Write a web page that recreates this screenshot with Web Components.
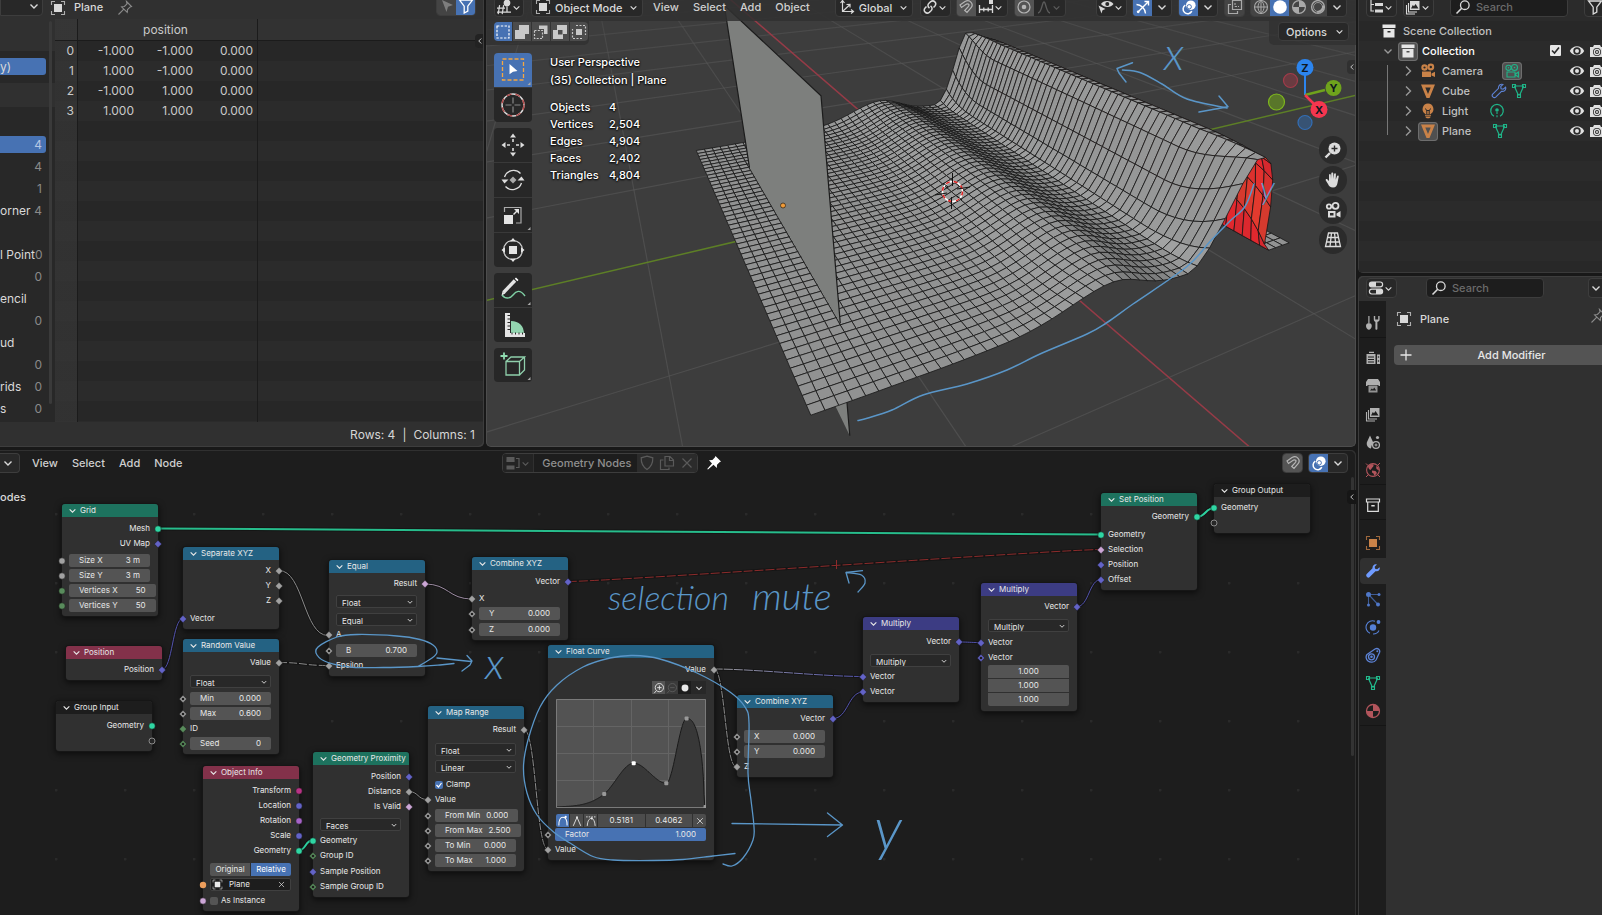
<!DOCTYPE html>
<html lang="en">
<head>
<meta charset="utf-8">
<title>Geometry Nodes</title>
<style>
  html, body {
    height: 100%;
    margin: 0;
  }
  body {
    background: #181818;
    color: #d9d9d9;
    font: 500 11px/20px Inter, "Liberation Sans", sans-serif;
    overflow: hidden;
  }
</style>
</head>
<body>
<app-window></app-window>

<script>
// ---------- icons, all on a 16 unit grid ----------
const line = (d, w = 1.2, extra = "") =>
  `<path d="${d}" fill="none" stroke="currentColor" stroke-width="${w}" ${extra}/>`;
const fill = (d, extra = "") => `<path d="${d}" fill="currentColor" ${extra}/>`;
const ring = (x, y, r, w = 1.2) =>
  `<circle cx="${x}" cy="${y}" r="${r}" fill="none" stroke="currentColor" stroke-width="${w}"/>`;
const dot = (x, y, r) => `<circle cx="${x}" cy="${y}" r="${r}" fill="currentColor"/>`;

const WRENCH = "M14.6 4.2l-2.5 2-2-.5-.4-2 2.2-2.3C9.500 .6 7.200 2.400 7.500 5.300L1.700 11.100c-1.600 1.900 1.100 4.700 3 3l5.800-5.800c3 .4 4.900-1.800 4.100-4.100z";
const CAMERA_BODY = "M3 9h8v5H3zM11.500 11l3-2v5l-3-2z";

const ICONS = {
  down: line("M4.500 6.500L8 10l3.500-3.500", 1.4),
  right: line("M6 3.500l4.500 4.500L6 12.500", 1.4),
  left: line("M10 4L6 8l4 4", 1.4),
  close: line("M3.500 3.500l9 9M12.500 3.500l-9 9", 1.2),
  plus: line("M8 2.500v11M2.500 8h11", 1.3),
  object: fill("M4 4h8v8H4z") + line("M1.500 5V1.500H5M11 1.500h3.500V5M14.500 11v3.500H11M5 14.500H1.500V11", 1.1, 'opacity=".75"'),
  pin: line("M9.500 1.500l5 5-1.300.4-2.700 2.600-.3 2.900-5.600-5.600 2.800-.3 2.600-2.600zM6.800 9.200L1.500 14.500", 1.1),
  pinned: fill("M9.500 1l5.500 5.500-1.500.8-2.500 2.400-.2 3.400-3.300-3.400L2 14.500l-.8-.4L6 8.400 3 5.300l3.400-.4L8.800 2.500z"),
  cursor: fill("M3 2l11 5-5 1.800L7.500 14z"),
  funnel: line("M1.500 2h13L9.800 8.200V13L6.200 15V8.200z", 1.3),
  grid3: fill("M1 12.500h14v1.200H1zM1 8.500h8v1.200H1zM3 6l1.200.2-1.400 9L1.600 15zM7 6l1.200.2-1.400 9L5.600 15z") + dot(11, 4, 3.4) + line("M11 7.500v5.500", 1.3),
  axes: line("M3.500 2v10.500H14M3.500 12.500L10.500 6M1.500 4l2-2.500 2 2.500M12 10.500l2.500 2-2.500 2M7.500 5.500l3.500-.2v3.200", 1.2),
  link: line("M7.500 9.200c-2-1.500-2-3.600-.5-5l1.700-1.500c3-2.300 6.600 1.300 4.200 4.200l-1.400 1.500M8.500 6.800c2 1.500 2 3.600.5 5l-1.700 1.500c-3 2.300-6.600-1.300-4.200-4.200l1.400-1.500", 1.5),
  magnet: line("M2 6l5-3.500c5-2.500 9.200 2.500 5.900 6.300L9 13.500 6.700 11.500l3.800-4.200c1.300-1.900-.3-3-2-2.200L3.500 8.500z", 1.2),
  snap: line("M1.500 6v8M14.500 6v8M1.500 10.500h13M5.800 8.500v4M10.200 8.500v4", 1.3) + fill("M11 1h4v4h-4z"),
  prop: ring(8, 8, 6) + dot(8, 8, 2.3),
  falloff: line("M2 14C6 13.500 6 3 8 3s2 10.500 6 11", 1.3),
  eyecur: fill("M3 5C5 1 13 1 15.500 5 13 9 6 9 3 5zm6.300-2a2 2 0 100 4 2 2 0 000-4z", 'fill-rule="evenodd"') + fill("M.5 6.500l7 3.500-3 1.200-1 3.300z"),
  gizmo: line("M1.500 5.500C6 5.500 10.500 10 10.500 14.500M3 13L13.500 2.500M9.500 2.500h4v4", 1.4) + dot(3.2, 12.8, 1.4),
  overlay: dot(9.800, 6.200, 4.800) + line("M4.300 6.200a4.600 4.600 0 106.500 6", 1.5) + `<circle cx="8.200" cy="7.800" r="2.200" fill="none" stroke="#4772b3"/>`,
  xray: line("M5.500 1.500h9v9h-9zM4 5.500H1.500v9h9V12", 1.2) + line("M8 4v3.500M8 7.500h4", 1.1, 'stroke-dasharray="2 1"'),
  wire: ring(8, 8, 6.500, 1.1) + line("M1.500 8h13M8 1.500v13M8 1.500c-4 3-4 10 0 13M8 1.500c4 3 4 10 0 13", 1),
  solid: dot(8, 8, 6.800),
  matprev: ring(8, 8, 6.400, 1.2) + fill("M8 8V1.600A6.400 6.400 0 0114.400 8zM8 8v6.400A6.400 6.400 0 011.600 8z"),
  rendered: ring(8, 8, 6.400, 1.4) + line("M13.200 6.500c.5 3.500-2.500 6.500-6 6.500", 2.200) + ring(8, 8, 4.500, .8),
  tree: fill("M7 4h8v3H7zM7 10.500h8v3H7z") + line("M3 1v11h3M3 5.500h3", 1.2),
  images: fill("M5 2h9.500v9H5zm1 7.500h7.500L10.600 5 9 7.300 7.800 6z", 'fill-rule="evenodd"') + line("M3.500 4v9h8.500M1.500 6v9h8.500", 1.1),
  search: ring(9.800, 6.200, 4.300, 1.3) + line("M6.700 9.300L1.500 14.500", 1.6),
  collection: fill("M1.500 1.500h13v3.500h-13zM2.500 6h11v8.500h-11zm4 2v1.500h3V8z", 'fill-rule="evenodd"'),
  box: line("M1.500 2h13v3h-13zM2.700 5v9.300h10.600V5", 1.2) + fill("M6.300 8h3.400v1.400H6.300z"),
  camera: dot(4.500, 4.500, 3.200) + dot(10.800, 4, 3.400) + fill("M2 8.500h9v5.500H2zM11.500 10.500l3.500-1.800V14l-3.500-1.500z") + '<circle cx="4.500" cy="4.500" r="1.100" fill="#282828"/><circle cx="10.800" cy="4" r="1.200" fill="#282828"/>',
  cameradata: ring(4.500, 4.800, 2.600, 1.1) + ring(10.500, 4.500, 3, 1.1) + line(CAMERA_BODY, 1.1) + dot(4.500, 4.800, .7) + dot(10.500, 4.500, .8),
  meshobj: fill("M1 1.500h14L9.500 15h-3zM5.300 4.500L8 11l2.700-6.500z", 'fill-rule="evenodd"'),
  meshdata: line("M3 3h10M3.500 3.500l4 9M12.500 3.500l-4 9", 1.2) + line("M1.500 1.500h3v3h-3zM11.500 1.500h3v3h-3zM6.500 11.500h3v3h-3z", 1.1),
  light: fill("M8 .5a5.600 5.600 0 013 10.200V11H5v-.3A5.600 5.600 0 018 .5zM5 11.800h6v1H5zM5.500 13.500h5v.8l-1.300 1H6.800l-1.300-1z") + `<path d="M5.500 5.500l1 2h3l1-2M6.800 7.500V11M9.200 7.500V11" stroke="#282828" fill="none"/>`,
  lightdata: line("M5 13.300a6.300 6.300 0 116 0", 1.2) + dot(8, 7, 1.800) + line("M8 9v6", 1.1, 'stroke-dasharray="2 1.200"'),
  wrenchline: line(WRENCH, 1.1),
  wrench: fill(WRENCH),
  eye: fill("M.8 8C4 1.800 12 1.800 15.200 8 12 13.800 4 13.800.8 8zM8 4.300a3.700 3.700 0 100 7.400 3.700 3.700 0 000-7.400z", 'fill-rule="evenodd"') + dot(8, 8, 2),
  still: fill("M1 4h3l1-2h6l1 2h3v10H1zM8 5a4 4 0 100 8 4 4 0 000-8z", 'fill-rule="evenodd"') + ring(8, 9, 2.600, 1.2) + dot(8, 9, 1),
  props: line("M3.800 2h8.400a2.300 2.300 0 010 4.800H3.800a2.300 2.300 0 010-4.800zM3.800 9.200h8.400a2.300 2.300 0 010 4.800H3.800a2.300 2.300 0 010-4.800z", 1.2) + fill("M3.800 2H8v4.800H3.800a2.300 2.300 0 010-4.800zM8 9.200h4.200a2.300 2.300 0 010 4.800H8z"),
  tools: fill("M3.300 1h1.200v7.500h1.200c2 1.500 1 5.800-1.800 6.200-2.800-.4-3.800-4.700-1.800-6.200h1.200zM8.800 1v3.500c0 1.500 1 2 1.600 2.500V14c0 1 2 1 2 0V7c1-.5 2.200-1 2.200-2.500V1h-1.400v3.500h-3V1z"),
  render: fill("M1.500 4h9v10h-9zM12 4.500h3v9.500h-3zM4 1.800h5V3H4z") + `<path d="M3 7h6M3 9.500h6M3 12h6" stroke="#1d1d1d" fill="none"/><circle cx="13.500" cy="7" r=".8" fill="#1d1d1d"/><circle cx="13.500" cy="11" r=".8" fill="#1d1d1d"/>`,
  output: fill("M3 1h10l2 3v4h-1.500V7h-11v1H1V4z") + fill("M3.500 7.500h9v7h-9z", 'opacity=".8"') + `<path d="M5 12.500l1.800-2 1.200 1 1.200-2 2 3z" fill="#1d1d1d"/>`,
  scene: fill("M5 1.500l3 6.500H2zM2 8c-1 3 1 6 4 6.500.5-3 1-5 3.500-6.500z") + ring(11, 11, 3.400, 1.3) + ring(11, 11, 1, 1) + dot(12.500, 3.500, 1.600),
  world: ring(8, 8, 6.400, 1.1) + fill("M3 4.500c2-2.500 4-2.500 5.500-2 .5 2-1 2.500-1.500 3.500L5.500 8C4 7.500 3.500 6.500 3 4.500zM7 8.500l3.500.5 1.500 2-2.500 3-1-2.500L7 10.500zM11 4l2.500 1.500.5 3-2.500-1.500z") + line("M1 1.500l2.200 2.200M12.800 12.800L15 15M12.800 3.200L15 1M1 15l2.200-2.200", 1),
  particles: dot(3.500, 3.500, 2.500) + line("M3.500 4v10M3.500 3.500h11M5 5l8 8.500", 1.1, 'opacity=".7"') + dot(14, 3.500, 1.500) + dot(3.500, 14, 1.500) + dot(13, 13.500, 2),
  physics: dot(8, 8.500, 3.200) + line("M10 2.300A6.400 6.400 0 105 14.200M8 15a6.500 6.500 0 006-3.500", 1.1) + dot(13.500, 3, 1.900),
  constraint: line("M2 7.500L10 2c3-1.500 5.500 1 4.500 3.500L11 13c-2 3-6 2.500-8 1S.500 9.500 2 7.500z", 1.3) + ring(6.500, 9.800, 3, 1.3) + dot(6.500, 9.800, 1.300) + dot(12.300, 4.200, 1),
  material: ring(8, 8, 6.500, 1.3) + fill("M8 8V1.500A6.500 6.500 0 0114.500 8zM8 8v6.500A6.500 6.500 0 011.500 8z"),
  nodetree: fill("M1.500 2h8v3h-8zM1.500 10.500h8v4h-8z") + line("M2 5.500h7v1H2zM11 3.500h3v9h-3", 1.2),
  shield: line("M8 1.200l5.800 1.600c.2 5-1.600 9-5.800 11.700C3.800 11.800 2 7.800 2.200 2.800z", 1.2),
  copy: line("M6 1.500h5l3.500 3.500v6H6zM4.500 5H1.500v9.500h8.500V12.500M10.500 2v3.500h3.500", 1.2),
  selbox: line("M2 2h12v12H2z", 1.2, 'stroke-dasharray="2.400 1.400"'),
  selext: fill("M5 1h10v9h-4v5H1V6h4z"),
  selsub: fill("M6 1.500h8.500V10H11V5H6z") + line("M1.500 6.500h8v8h-8z", 1.2, 'stroke-dasharray="2 1.300"'),
  seldiff: fill("M5 1h10v9h-4v5H1V6h4zM6 6v4.500h4.500V6z", 'fill-rule="evenodd"'),
  selint: fill("M5 5h6v6H5z") + line("M5 1.500h9.500V11M11 14.500H1.500V5", 1.2, 'stroke-dasharray="2 1.500"'),
  zoomin: ring(8.500, 7.500, 5.500, 1.2) + line("M8.500 4.500v6M5.500 7.500h6M4.500 11.500L1.500 15", 1.2),
  zoomout: ring(8.500, 7.500, 5.500, 1.2) + line("M5.500 7.500h6M4.500 11.500L1.500 15", 1.2),
  clip: dot(8, 8, 4.600),
  hauto: line("M2.500 14C2.500 5 5 3 8 3s5.500 2 5.500 11", 1.4) + dot(11.500, 2.500, 1.500),
  hvec: line("M3 14.500L8 3l5 11.500", 1.2) + dot(8, 3, 1.300),
  hclamp: line("M3 14.500C3.500 7 6 5 8 4.500s5 2 5.500 10", 1.2) + line("M1.500 2.500h13", 1.2, 'stroke-dasharray="2 1.500"') + dot(9, 4.500, 1.400)
};

class BlIcon extends HTMLElement {
  constructor() {
    super();
    this.attachShadow({ mode: "open" });
  }
  connectedCallback() {
    this.shadowRoot.innerHTML = `
      <style>
        :host { display: inline-flex; flex: none; width: var(--size, 16px); height: var(--size, 16px); }
        svg { width: 100%; height: 100%; display: block; }
      </style>
      <svg viewBox="0 0 16 16" aria-hidden="true">${ICONS[this.getAttribute("name")] || ""}</svg>`;
  }
}
customElements.define("bl-icon", BlIcon);

const icon = (name) => `<bl-icon name="${name}"></bl-icon>`;
const chevron = '<bl-icon class="chev" name="down"></bl-icon>';

// Shared look of the header widgets
const WIDGETS = `
  * { box-sizing: border-box; }
  button, select, input {
    font: inherit; color: inherit; margin: 0; padding: 0; border: 0;
    background: none; appearance: none; outline: 0; min-width: 0;
  }
  .bar { display: flex; align-items: flex-end; }
  .menu { height: 20px; padding: 0 7px; color: #cfcfcf; flex: none; }
  .group { display: flex; flex: none; height: 20px; border-radius: 4px; border: 1px solid #3d3d3d; background: #282828; overflow: hidden; }
  .group > button { display: flex; align-items: center; justify-content: center; height: 100%; }
  .on { background: #4772b3; color: #fff; }
  .grey { background: #545454; color: #b5b5b5; }
  .dim { background: #444; color: #aaa; }
  .grow { flex: 1; }
  .chev { --size: 13px; }
  .group .chev { margin-left: -2px; }
`;

class BlElement extends HTMLElement {
  constructor() {
    super();
    this.attachShadow({ mode: "open" });
  }
  connectedCallback() {
    this.shadowRoot.innerHTML = `<style>${WIDGETS}${this.css()}</style>${this.html()}`;
  }
  css() { return ""; }
  html() { return ""; }
}

// Drop-down with an icon, its current value and a chevron
class DropDown extends BlElement {
  css() {
    return `
      :host { display: block; flex: none; }
      label { display: flex; align-items: center; gap: 4px; height: 20px; padding: 0 2px 0 3px; border: 1px solid #3d3d3d; border-radius: 4px; background: #282828; }
      select { flex: 1; height: 18px; }
    `;
  }
  html() {
    const value = this.getAttribute("value");
    return `<label>${icon(this.getAttribute("icon"))}
      <select aria-label="${value}"><option>${value}</option></select>${chevron}</label>`;
  }
}
customElements.define("drop-down", DropDown);

class SearchBox extends BlElement {
  css() {
    return `
      :host { display: block; width: 118px; flex: none; }
      label { display: flex; align-items: center; gap: 5px; height: 20px; padding: 0 4px; border: 1px solid #3d3d3d; border-radius: 4px; background: #1d1d1d; }
      input { flex: 1; width: 0; height: 18px; }
      input::placeholder { color: #6b6b6b; opacity: 1; }
    `;
  }
  html() {
    return `<label>${icon("search")}<input type="text" placeholder="Search" aria-label="Search"></label>`;
  }
}
customElements.define("search-box", SearchBox);

// ---------- spreadsheet ----------
class SpreadSheet extends BlElement {
  css() {
    return `
      :host { display: grid; grid-template: 19px 1fr 25px / 55px 1fr; position: relative; background: #303030; border-radius: 0 0 5px 0; overflow: hidden; box-shadow: inset -1px -1px #3d3d3d; font-size: 12px; font-weight: 400; }
      .bar { grid-column: 1 / 3; padding: 0 8px 3px 0; height: 19px; }
      .bar bl-icon { align-self: flex-end; }
      .bar button bl-icon { align-self: center; }
      .first { width: 43px; justify-content: flex-end; border-radius: 0 4px 4px 0; margin-right: 7px; }
      .name { margin: 0 14px 0 8px; height: 19px; font-size: 11px; font-weight: 500; }
      .pin { display: flex; color: #8a8a8a; }
      .filters button { width: 19px; }
      .off { background: #444; color: #7d7d7d; }
      nav { display: grid; grid-template-rows: 32px 32px 24px 1fr; background: #282828; overflow: hidden; position: relative; }
      nav::after { content: ""; position: absolute; right: 3px; top: 2px; bottom: 18px; width: 3px; border-radius: 2px; background: #3a3a3a; }
      .strip { background: #303030; }
      .pick { background: #4772b3; height: 17px; line-height: 17px; width: 46px; border-radius: 0 3px 3px 0; }
      .inst { margin-top: 7px; }
      ul { list-style: none; margin: 27px 0 0; padding: 0; width: 46px; }
      li { display: flex; justify-content: space-between; height: 22px; line-height: 22px; padding-right: 4px; white-space: nowrap; }
      li span { color: #8a8a8a; }
      li.pick { padding-right: 4px; margin: 2px 0 3px; height: 17px; line-height: 17px; }
      li.pick span { color: #b5c7e3; }
      .sheet { overflow: hidden; margin-right: 1px;
        background: linear-gradient(#1b1b1b, #1b1b1b) 202px 0 / 1px 100% no-repeat,
          linear-gradient(#1b1b1b, #1b1b1b) 22px 0 / 1px 100% no-repeat,
          linear-gradient(#1b1b1b, #1b1b1b) 0 21px / 100% 1px no-repeat,
          linear-gradient(#383838a0, #383838a0) 0 0 / 22px 100% no-repeat,
          linear-gradient(#323232, #323232) 0 0 / 100% 21px no-repeat,
          repeating-linear-gradient(#272727 0 20px, #2b2b2b 20px 40px) 0 22px; }
      table { border-collapse: collapse; table-layout: fixed; width: 202px; }
      th, td { font-weight: 400; padding: 0 4px 0 0; height: 20px; text-align: right; color: #cacaca; }
      thead th { height: 22px; line-height: 22px; text-align: center; }
      footer { grid-column: 1 / 3; text-align: right; padding: 3px 9px 0 0; color: #d6d6d6; }
      footer span { margin: 0 7px; }
      .side { position: absolute; right: 1px; top: 34px; width: 8px; height: 14px; border-radius: 4px 0 0 4px; background: #222; display: flex; align-items: center; --size: 10px; }
    `;
  }
  html() {
    const rows = [["-1.000", "-1.000"], ["1.000", "-1.000"], ["-1.000", "1.000"], ["1.000", "1.000"]];
    const domains = [["", 4], ["", 1], ["orner", 4], ["", ""], ["l Point", 0], ["", 0], ["encil", ""], ["", 0], ["ud", ""], ["", 0], ["rids", 0], ["s", 0]];
    return `
      <div class="bar">
        <div class="group first"><button aria-label="Object state">${icon("down")}</button></div>
        ${icon("object")}<span class="name">Plane</span><span class="pin">${icon("pin")}</span>
        <span class="grow"></span>
        <div class="group filters"><button class="off" aria-label="Selected only">${icon("cursor")}</button><button class="on" aria-label="Filter">${icon("funnel")}</button></div>
      </div>
      <nav>
        <div class="strip"></div>
        <div><div class="pick inst">y)</div></div>
        <div class="strip"></div>
        <ul><li class="pick"><i></i><span>4</span></li>
          ${domains.map(([name, n]) => `<li>${name || "<i></i>"}<span>${n}</span></li>`).join("")}</ul>
      </nav>
      <div class="sheet"><table>
        <colgroup><col style="width:23px"><col style="width:60px"><col style="width:59px"><col style="width:60px"></colgroup>
        <thead><tr><th></th><th colspan="3">position</th></tr></thead>
        <tbody>${rows.map((r, i) => `<tr><th>${i}</th><td>${r[0]}</td><td>${r[1]}</td><td>0.000</td></tr>`).join("")}</tbody>
      </table></div>
      <footer>Rows: 4<span>|</span>Columns: 1</footer>
      <div class="side">${icon("left")}</div>`;
  }
}
customElements.define("spread-sheet", SpreadSheet);

// ---------- the float curve, used by its node and by the mesh ----------
// x, y, slope
const CURVE = [
  [0, 0, 0.1], [0.32, 0.12, 1.1], [0.518, 0.406, 0],
  [0.737, 0.22, 0], [0.873, 0.82, 0], [1, 0, 0]
];
// The surface drops faster behind its first wave
const SURFACE = [
  [0, 0, 0.1], [0.32, 0.12, 1.1], [0.54, 0.41, 0],
  [0.675, 0.245, -1.2], [0.745, 0.205, 0], [0.873, 0.82, 0], [1, 0, 0]
];
function evalCurve(knots, x) {
  if (x > 0.873) {
    const t = Math.min(1, (x - 0.873) / 0.118);
    return 0.82 * Math.sqrt(1 - t ** 2.4);
  }
  let i = 0;
  while (x > knots[i + 1][0]) i++;
  const [x0, y0, m0] = knots[i];
  const [x1, y1, m1] = knots[i + 1];
  const w = x1 - x0;
  const t = (x - x0) / w;
  return (2 * t ** 3 - 3 * t * t + 1) * y0 + (t ** 3 - 2 * t * t + t) * w * m0
    + (3 * t * t - 2 * t ** 3) * y1 + (t ** 3 - t * t) * w * m1;
}

// Smooth open stroke through a list of points
function stroke(points) {
  let d = `M${points[0]}`;
  for (let i = 0; i < points.length - 1; i++) {
    const a = points[i - 1] || points[i];
    const b = points[i];
    const c = points[i + 1];
    const e = points[i + 2] || c;
    const c1 = [b[0] + (c[0] - a[0]) / 6, b[1] + (c[1] - a[1]) / 6];
    const c2 = [c[0] - (e[0] - b[0]) / 6, c[1] - (e[1] - b[1]) / 6];
    d += `C${c1.map((v) => v.toFixed(1))} ${c2.map((v) => v.toFixed(1))} ${c}`;
  }
  return `<path d="${d}"/>`;
}

// ---------- 3D scene ----------
const CAM = {
  cx: 920, cy: 215, f: 608,
  o: [0.2246, -0.172, 4.268],
  x: [0.4439, 0.449, -0.7755],
  y: [0.8963, -0.2222, 0.3838],
  z: [0, -0.8655, -0.501],
  pos: [3.29, -1.877, 1.99]
};
const toCam = (x, y, z) => [0, 1, 2].map((i) => CAM.o[i] + x * CAM.x[i] + y * CAM.y[i] + z * CAM.z[i]);
const toScreen = (p) => [(CAM.cx + CAM.f * p[0] / p[2]).toFixed(1), (CAM.cy + CAM.f * p[1] / p[2]).toFixed(1)];
const project = (x, y, z) => toScreen(toCam(x, y, z));

function line3d(a, b, color, width) {
  let p = toCam(...a);
  let q = toCam(...b);
  const near = 0.2;
  if (p[2] < near && q[2] < near) return "";
  if (p[2] < near || q[2] < near) {
    const t = (near - p[2]) / (q[2] - p[2]);
    const m = p.map((v, i) => v + (q[i] - v) * t);
    if (p[2] < near) p = m; else q = m;
  }
  return `<path d="M${toScreen(p)}L${toScreen(q)}" stroke="${color}" stroke-width="${width}" fill="none"/>`;
}

function floor() {
  let out = "";
  for (let k = -14; k <= 14; k++) {
    for (let s = -14; s < 14; s++) {
      const d = Math.hypot(k, s + 0.5);
      const color = `rgba(100,100,100,${Math.max(0, 0.5 - d * 0.032).toFixed(2)})`;
      if (k !== 0) {
        out += line3d([k, s, 0], [k, s + 1, 0], color, 1.2);
        out += line3d([s, k, 0], [s + 1, k, 0], color, 1.2);
      }
    }
  }
  out += line3d([-14, 0, 0], [14, 0, 0], "#963b47", 1.5);
  out += line3d([0, -14, 0], [0, 14, 0], "#5d7f26", 1.5);
  return out;
}

const PLANE_Y = -1.19;
function height(x, y) {
  const dist = Math.hypot(y - PLANE_Y - 0.03, Math.max(0, Math.abs(x) - 1));
  return evalCurve(SURFACE, dist / 2.5) ** 2;
}

// Grey level by the angle of the face, in degrees towards the camera side
const RAMP = [[-90, 90], [-45, 100], [-20, 120], [0, 145], [35, 162], [75, 148], [90, 127]];
function grey(angle) {
  let i = 0;
  while (i < RAMP.length - 2 && angle > RAMP[i + 1][0]) i++;
  const [a, v] = RAMP[i];
  const [b, w] = RAMP[i + 1];
  return Math.round(v + (w - v) * (angle - a) / (b - a));
}

function mesh(from, to) {
  const n = 49;
  const at = (i) => -1.5 + 3 * i / n;
  let out = "";
  for (let j = n - 1; j >= 0; j--) {
    const y0 = at(j);
    const y1 = at(j + 1);
    if (y0 < from || y0 >= to) continue;
    for (let i = 0; i < n; i++) {
      const x0 = at(i);
      const x1 = at(i + 1);
      const v = [[x0, y0], [x1, y0], [x1, y1], [x0, y1]].map(([x, y]) => [x, y, height(x, y)]);
      const u = v[2].map((c, k) => c - v[0][k]);
      const w = v[3].map((c, k) => c - v[1][k]);
      const nrm = [u[1] * w[2] - u[2] * w[1], u[2] * w[0] - u[0] * w[2], u[0] * w[1] - u[1] * w[0]];
      const view = CAM.pos.map((c, k) => c - (v[0][k] + v[2][k]) / 2);
      const facing = nrm[0] * view[0] + nrm[1] * view[1] + nrm[2] * view[2] > 0;
      const g = grey(Math.atan2(-nrm[1], nrm[2]) * 180 / Math.PI);
      const color = facing ? `rgb(${g},${g + 1},${g + 1})` : `rgb(${214 + (i % 3) * 6},${40 + (j % 3) * 9},46)`;
      out += `<path d="M${v.map((p) => project(...p)).join("L")}Z" fill="${color}"/>`;
    }
  }
  return `<g stroke="#161616" stroke-width=".8" stroke-linejoin="round">${out}</g>`;
}

function quad(z0, z1) {
  const pts = [[-1, z1], [1, z1], [1, z0], [-1, z0]].map(([x, z]) => project(x, PLANE_Y, z));
  return `<path d="M${pts.join("L")}Z" fill="#7d7f7d"/>
    <path d="M${[pts[3], ...pts.slice(0, 3)].join("L")}" fill="none" stroke="#1c1c1c" stroke-width="1.2"/>`;
}

class SceneView extends BlElement {
  css() {
    return `
      :host { display: block; }
      svg { display: block; width: 100%; height: 100%; }
      .ink { fill: none; stroke: #5a96c8; stroke-width: 1.5; stroke-linecap: round; stroke-linejoin: round; }
      .ink text { fill: #5a96c8; stroke: none; font-family: Lato, sans-serif; font-style: italic; font-weight: 300; }
    `;
  }
  html() {
    return `<svg viewBox="486 0 870 447" preserveAspectRatio="xMidYMid slice">
      ${floor()}
      ${quad(-0.82, 0)}
      ${mesh(-1.2, 2)}
      ${quad(0, 1.18)}
      ${mesh(-2, -1.2)}
      <circle cx="783" cy="205.500" r="2.500" fill="#f09a37" stroke="#3a2c1c" stroke-width=".8"/>
      <g fill="none" stroke-width="1.5">
        <circle cx="952.500" cy="191.500" r="10" stroke="#fff"/>
        <circle cx="952.500" cy="191.500" r="10" stroke="#e02020" stroke-dasharray="4 4"/>
        <path d="M952.500 173v13M951.500 197v12M935 195l12-2M957 189l13-2M943 183l5 4M957 196l5 4" stroke="#111" stroke-width="1"/>
      </g>
      <g class="ink">
        ${stroke([[858, 420.5], [868, 418], [892, 410], [923, 395], [967, 384], [1007, 370], [1040, 354], [1087, 334], [1107, 322.5], [1133, 304], [1187, 266.5], [1210, 241.5], [1230, 221], [1245, 206.5], [1254, 184]])}
        ${stroke([[1122.5, 70], [1140, 72.5], [1162, 84], [1187, 99], [1227, 108]])}
        <path d="M1132.500 62.700L1117 68.500L1119 73L1126 82M1219 96L1228 106.700L1199 112"/>
        <text x="1164" y="70" font-size="46">x</text>
        <text x="1260" y="199" font-size="32">y</text>
      </g>
    </svg>`;
  }
}
customElements.define("scene-view", SceneView);

// Axis ball and the navigation buttons below it
class NavGizmo extends BlElement {
  css() {
    return `
      :host { display: flex; flex-direction: column; align-items: flex-end; width: 84px; }
      .ball { width: 84px; height: 76px; display: block; }
      .ball text { font: 700 11px Inter, sans-serif; text-anchor: middle; fill: #101820; }
      .nav { display: grid; gap: 2px; margin: 3px 1px 0 0; }
      .nav button { width: 28px; height: 28px; border-radius: 50%; background: #2b2b2b; color: #dcdcdc; display: grid; place-items: center; }
      .nav svg { width: 18px; height: 18px; }
    `;
  }
  html() {
    const b = (label, art) => `<button aria-label="${label}"><svg viewBox="0 0 18 18">${art}</svg></button>`;
    return `
      <svg class="ball" viewBox="1264 57 84 76">
        <path d="M1305 95V75" stroke="#2c85ee" stroke-width="2"/>
        <path d="M1305 95l20-5" stroke="#6fa31c" stroke-width="2.500"/>
        <path d="M1305 95l9 9" stroke="#f5364f" stroke-width="2.500"/>
        <circle cx="1290.500" cy="80.500" r="7" fill="#f5364f40" stroke="#a23b4a" stroke-width="1.200"/>
        <circle cx="1276.500" cy="102" r="8" fill="#6fa31c90" stroke="#7fb71e" stroke-width="1.200"/>
        <circle cx="1305" cy="122.500" r="7" fill="#2c85ee50" stroke="#336eb5" stroke-width="1.200"/>
        <circle cx="1305" cy="67.500" r="8.500" fill="#2c85ee"/><text x="1305" y="71.500">Z</text>
        <circle cx="1333.500" cy="88" r="8" fill="#6fa31c"/><text x="1333.500" y="92">Y</text>
        <circle cx="1319" cy="109.500" r="8.500" fill="#f5364f"/><text x="1319" y="113.500">X</text>
      </svg>
      <div class="nav">
        ${b("Zoom", '<circle cx="10.500" cy="7.500" r="6" fill="currentColor"/><path d="M6 12l-4.500 4.500" stroke="currentColor" stroke-width="2.400"/><path d="M10.500 4.500v6M7.500 7.500h6" stroke="#2b2b2b" stroke-width="1.400"/>')}
        ${b("Pan", '<path d="M5 10V4c0-1.300 1.700-1.300 1.800 0L7 8l.3-5.500c0-1.500 1.900-1.500 2 0V8l.8-5c.3-1.300 1.900-1 1.800.3L11.700 8.700l1.300-3.500c.5-1.200 2-.6 1.700.6L13.500 12c-.5 2.500-1.500 4.500-4.500 4.500s-4-1.500-5-3.500L1.800 9.500c-.6-1.300.8-2 1.700-1z" fill="currentColor"/>')}
        ${b("Camera", '<g fill="none" stroke="currentColor" stroke-width="1.800"><circle cx="5" cy="5.500" r="2.200"/><circle cx="11.500" cy="4.800" r="3"/></g><path d="M4 10h7.500v6.500H4zM12.500 12.500l4-2.500v6.500l-4-2z" fill="currentColor"/><path d="M6 12h3.500v2.500H6z" fill="#2b2b2b"/>')}
        ${b("Perspective", '<path d="M4.500 2h9l3 13.500h-15zM3.500 6.500h11M2.500 11h13M7.500 2L6 15.500M10.500 2l1.500 13.500" fill="none" stroke="currentColor" stroke-width="1.300"/>')}
      </div>`;
  }
}
customElements.define("nav-gizmo", NavGizmo);

class ToolShelf extends BlElement {
  css() {
    return `
      :host { display: grid; gap: 6px; width: 38px; }
      div { display: grid; gap: 1px; border-radius: 4px; overflow: hidden; background: #393939; }
      button { width: 38px; height: 34px; background: #272727; display: grid; place-items: center; }
      button svg { width: 38px; height: 34px; display: block; }
      button.on { background: #4772b3; }
    `;
  }
  html() {
    const corner = '<path d="M36.500 29v3h-3z" fill="#aaa"/>';
    const b = (label, art, cls = "") => `<button class="${cls}" aria-label="${label}"><svg viewBox="0 0 38 34">${art}</svg></button>`;
    return `
      <div>
        ${b("Select Box", `<path d="M8.500 6h21v21h-21z" fill="none" stroke="#f4a742" stroke-width="1.300" stroke-dasharray="4 2"/><path d="M15.500 11l8 7-4.500.8-3.500 2.500z" fill="#fff"/>${corner}`, "on")}
        ${b("Cursor", '<circle cx="19" cy="17" r="11" fill="none" stroke="#ddd" stroke-width="1.400"/><circle cx="19" cy="17" r="11" fill="none" stroke="#b04848" stroke-width="1.400" stroke-dasharray="5 4"/><path d="M19 9.500v6M19 18.500v6M11.500 17h6M20.500 17h6" stroke="#888" stroke-width="1.200"/>')}
      </div>
      <div>
        ${b("Move", '<path d="M19 5.500l3 4h-6zM19 28.500l3-4h-6zM7.500 17l4-3v6zM30.500 17l-4-3v6z" fill="#ddd"/><path d="M19 11v3M19 20v3M13 17h3M22 17h3" stroke="#ddd" stroke-width="1.600"/>')}
        ${b("Rotate", '<path d="M10.500 14a9.500 9.500 0 0116-3.500M27.500 20a9.500 9.500 0 01-16 3.500" fill="none" stroke="#ddd" stroke-width="1.300"/><path d="M7.500 16.500h7l-4 4zM30.500 17.500h-7l4-4z" fill="#ddd"/><path d="M19 13.500l3.500 3.500-3.500 3.500-3.500-3.500z" fill="#aaa"/>')}
        ${b("Scale", `<path d="M10.500 14V9.500h16.500V25H22" fill="none" stroke="#aaa" stroke-width="1.200"/><path d="M10 17h9v9h-9zM25 11v5l-5-5z" fill="#e4e4e4"/><path d="M19.500 16.500l4-4" stroke="#e4e4e4" stroke-width="1.400"/>${corner}`)}
        ${b("Transform", '<circle cx="19" cy="17" r="9.500" fill="none" stroke="#ccc" stroke-width="1.200"/><path d="M15 13h8v8h-8zM19 5l3 3.500h-6zM19 29l3-3.500h-6zM7.500 17l3.500-3v6zM30.500 17l-3.500-3v6z" fill="#e4e4e4"/>')}
      </div>
      <div>
        ${b("Annotate", `<path d="M8 22c3 4 8 4 11 0s7-6 12 1" fill="none" stroke="#7fcfa4" stroke-width="1.400"/><path d="M9.500 19.500L21 7.500" stroke="#e4e4e4" stroke-width="3.400"/><path d="M7.500 22.500l1-4 2.800 2z" fill="#e4e4e4"/><path d="M22 4.500l2.500 2.500-1.200 1.200-2.500-2.500z" fill="#fff"/>${corner}`)}
        ${b("Measure", '<path d="M17 13c8 0 13 5 13 13H17z" fill="#93d5b0"/><path d="M11 5h5v20h15v4H11z" fill="#e4e4e4"/><path d="M13.500 7.500h2.500M13.500 11h2.500M13.500 14.500h2.500M13.500 18h2.500M13.500 21.500h2.500M18 26.500v-2M21.500 26.500v-2M25 26.500v-2M28.500 26.500v-2" stroke="#272727"/>')}
      </div>
      <div>
        ${b("Add Cube", `<path d="M12 13.500h13.500V27H12zM12 13.500l5-4.500h13.500l-5 4.500M30.500 9v13l-5 5" fill="none" stroke="#8fcfab" stroke-width="1.300"/><path d="M10 4.500v7M6.500 8h7" stroke="#8fdcb0" stroke-width="1.800"/>${corner}`)}
      </div>`;
  }
}
customElements.define("tool-shelf", ToolShelf);

class ViewPort extends BlElement {
  css() {
    return `
      :host { display: grid; grid-template: 21px 1fr / minmax(0, 1fr); position: relative; background: #3d3d3d; border-radius: 0 0 5px 5px; overflow: hidden; }
      scene-view { grid-area: 1 / 1 / 3 / 2; }
      :host::after { content: ""; position: absolute; inset: 0; border: 1px solid #4d4d4d; border-top: 0; border-radius: 0 0 5px 5px; pointer-events: none; }
      .bar { grid-area: 1 / 1; z-index: 1; height: 21px; padding: 0 9px 4px 8px; background: #303030d9; }
      .ed { width: 30px; margin-right: 7px; }
      .ed button, .ico button { width: 100%; }
      drop-down { margin-right: 3px; }
      .bar > .axis { margin: 0 7px 0 18px; }
      .ico { width: 31px; margin-right: 5px; }
      .pair { margin-right: 6px; }
      .pair button, .modes button { width: 19px; }
      .pair .wide { width: 31px; }
      .xr { margin-right: 5px; }
      .xr button { width: 19px; }
      .off { color: #5c5c5c; }
      .overlays { grid-area: 2 / 1; z-index: 1; display: flex; justify-content: space-between; align-items: flex-start; min-height: 0; }
      .sel { display: flex; width: 103px; height: 24px; padding: 1px 0 0 8px; background: #303030c0; border-radius: 0 0 5px 0; }
      .sel div { display: flex; height: 19px; border-radius: 4px; overflow: hidden; gap: 1px; }
      .sel button { width: 18px; background: #4c4c4c; color: #c8c8c8; display: grid; place-items: center; }
      .sel button.on { background: #4772b3; color: #fff; }
      .body { display: flex; gap: 18px; padding: 8px 0 0 8px; }
      .stats { color: #fff; text-shadow: 0 0 2px #000, 0 1px 2px #000; line-height: 18px; }
      .stats p { margin: 0; }
      dl { display: grid; grid-template-columns: 59px auto; margin: 10px 0 0; line-height: 17px; }
      dt, dd { margin: 0; }
      .right { display: flex; flex-direction: column; align-items: flex-end; }
      .opt { padding: 1px 7px 4px 9px; background: #303030c0; border-radius: 0 0 0 5px; }
      .opt button { display: flex; align-items: center; gap: 6px; height: 19px; padding: 0 2px 0 7px; border-radius: 4px; border: 1px solid #3d3d3d; background: #282828; }
      nav-gizmo { margin: 12px 8px 0 0; }
      .side { position: absolute; right: 1px; top: 60px; width: 8px; height: 14px; border-radius: 4px 0 0 4px; background: #303030; display: flex; align-items: center; --size: 10px; }
    `;
  }
  html() {
    const stats = [["Objects", "4"], ["Vertices", "2,504"], ["Edges", "4,904"], ["Faces", "2,402"], ["Triangles", "4,804"]];
    return `
      <scene-view></scene-view>
      <div class="bar">
        <div class="group ed"><button aria-label="Editor type">${icon("grid3")}${chevron}</button></div>
        <drop-down icon="object" value="Object Mode"></drop-down>
        ${["View", "Select", "Add", "Object"].map((m) => `<button class="menu">${m}</button>`).join("")}
        <drop-down class="axis" icon="axes" value="Global"></drop-down>
        <div class="group ico"><button aria-label="Pivot point">${icon("link")}${chevron}</button></div>
        <div class="group pair"><button class="grey" aria-label="Snap">${icon("magnet")}</button><button class="wide" aria-label="Snap to">${icon("snap")}${chevron}</button></div>
        <div class="group pair"><button class="grey" aria-label="Proportional editing">${icon("prop")}</button><button class="wide off" aria-label="Falloff">${icon("falloff")}${chevron}</button></div>
        <span class="grow"></span>
        <div class="group ico"><button aria-label="Visibility">${icon("eyecur")}${chevron}</button></div>
        <div class="group pair"><button class="on" aria-label="Gizmos">${icon("gizmo")}</button><button aria-label="Gizmo options">${icon("down")}</button></div>
        <div class="group pair"><button class="on" aria-label="Overlays">${icon("overlay")}</button><button aria-label="Overlay options">${icon("down")}</button></div>
        <div class="group xr"><button class="dim" aria-label="X-ray">${icon("xray")}</button></div>
        <div class="group modes">
          <button class="dim" aria-label="Wireframe">${icon("wire")}</button><button class="on" aria-label="Solid">${icon("solid")}</button><button class="dim" aria-label="Material preview">${icon("matprev")}</button><button class="dim" aria-label="Rendered">${icon("rendered")}</button><button aria-label="Shading options">${icon("down")}</button>
        </div>
      </div>
      <div class="overlays">
        <div>
          <div class="sel"><div>
            <button class="on" aria-label="Set">${icon("selbox")}</button><button aria-label="Extend">${icon("selext")}</button><button aria-label="Subtract">${icon("selsub")}</button><button aria-label="Difference">${icon("seldiff")}</button><button aria-label="Intersect">${icon("selint")}</button>
          </div></div>
          <div class="body">
            <tool-shelf></tool-shelf>
            <div class="stats"><p>User Perspective</p><p>(35) Collection | Plane</p>
              <dl>${stats.map(([k, v]) => `<dt>${k}</dt><dd>${v}</dd>`).join("")}</dl></div>
          </div>
        </div>
        <div class="right">
          <div class="opt"><button>Options ${chevron}</button></div>
          <nav-gizmo></nav-gizmo>
        </div>
      </div>
      <div class="side">${icon("left")}</div>`;
  }
}
customElements.define("view-port", ViewPort);

// ---------- nodes ----------
const SOCKETS = {
  geo: "#2fd6a3", vec: "#6363c7", num: "#a1a1a1", int: "#598c5c", bool: "#cca6d6",
  mat: "#b83385", rot: "#a663c7", obj: "#ed9e5c"
};
const HEADS = { green: "#1d725e", blue: "#246283", red: "#83314a", purple: "#3c3c83", dark: "#1d1d1d" };

class GeoNode extends BlElement {
  css() {
    return `
      :host { display: block; position: absolute; left: ${this.getAttribute("x")}px; top: ${this.getAttribute("y") - 450}px;
        width: ${this.getAttribute("w") || 96}px; background: #303030; border-radius: 3px; padding-bottom: 3px;
        box-shadow: 0 0 0 1px #161616, 0 2px 6px 1px #0009; font-size: 8px; font-weight: 400; line-height: 15px; color: #e8e8e8; }
      header { display: flex; align-items: center; gap: 1px; height: 13px; line-height: 13px; padding-left: 4px; margin-bottom: 3px;
        border-radius: 3px 3px 0 0; background: ${HEADS[this.getAttribute("head")]}; --size: 13px; white-space: nowrap; }
    `;
  }
  html() {
    return `<header>${icon("down")}${this.getAttribute("name")}</header><slot></slot>`;
  }
}
customElements.define("geo-node", GeoNode);

// One row of a node. kind: out, in, field, select, check
class NodeRow extends BlElement {
  css() {
    return `
      :host { display: flex; align-items: center; position: relative; height: 15px; padding: 0 8px 0 7px; margin-top: ${this.getAttribute("gap") || 0}px; white-space: nowrap; }
      :host([kind="out"]) { justify-content: flex-end; }
      .socket { position: absolute; left: -4px; top: 4px; width: 8px; height: 8px; display: block; }
      :host([kind="out"]) .socket { left: auto; right: -4px; }
      .field { flex: 1; display: flex; justify-content: space-between; height: 13px; line-height: 13px; padding: 0 10px; border-radius: 2px; background: #545454; }
      .field input { width: 28px; height: 13px; text-align: right; }
      .field.full { background: #4772b3; }
      .pull { flex: 1; display: flex; align-items: center; height: 13px; padding: 0 1px 0 5px; border-radius: 2px; border: 1px solid #404040; background: #282828; --size: 10px; }
      .pull select { flex: 1; height: 11px; }
      .check { display: flex; align-items: center; gap: 3px; height: 15px; }
      .check span { position: relative; display: flex; }
      .check input { width: 8px; height: 8px; border-radius: 2px; background: #545454; }
      .check input:checked { background: #4772b3; }
      .check svg { position: absolute; inset: 0; width: 8px; height: 8px; pointer-events: none; }
    `;
  }
  html() {
    const kind = this.getAttribute("kind");
    const label = this.getAttribute("label") || "";
    const value = this.getAttribute("value") || "";
    let body = label ? `<span>${label}</span>` : "";
    if (kind === "field") {
      body = `<label class="field ${this.hasAttribute("full") ? "full" : ""}">${label}<input type="text" value="${value}"></label>`;
    } else if (kind === "select") {
      body = `<span class="pull"><select aria-label="${value}"><option>${value}</option></select>${icon("down")}</span>`;
    } else if (kind === "check") {
      const on = this.hasAttribute("on");
      body = `<label class="check"><span><input type="checkbox" ${on ? "checked" : ""}>
        ${on ? '<svg viewBox="0 0 8 8"><path d="M1.500 4l2 2L6.500 2" fill="none" stroke="#fff" stroke-width="1.200"/></svg>' : ""}</span>${label}</label>`;
    }
    return this.socket() + body;
  }
  socket() {
    const type = this.getAttribute("socket");
    if (!type) return "";
    const shape = this.getAttribute("shape") || "diamond";
    const color = SOCKETS[type];
    let art = `<path d="M4 .3L7.700 4 4 7.700.3 4z" fill="${color}" stroke="#161616" stroke-width=".5"/>`;
    if (shape === "round") art = `<circle cx="4" cy="4" r="3.200" fill="${color}" stroke="#161616" stroke-width=".5"/>`;
    if (shape === "hollow") art += '<circle cx="4" cy="4" r="1.300" fill="#1d1d1d"/>';
    if (type === "none") art = '<circle cx="4" cy="4" r="3" fill="#262626" stroke="#8a8a8a"/>';
    return `<svg class="socket" viewBox="0 0 8 8">${art}</svg>`;
  }
}
customElements.define("node-row", NodeRow);

class CurveWidget extends BlElement {
  css() {
    return `
      :host { display: block; padding: 4px 8px 0; font-size: 8px; }
      .tools, .points { display: flex; justify-content: flex-end; height: 14px; }
      .tools button, .points button { display: grid; place-items: center; width: 13px; }
      .tools { --size: 12px; }
      .tools button { height: 13px; background: #3a3a3a; }
      .tools .lit { background: #545454; }
      .tools .off { color: #5c5c5c; }
      .tools .deep { background: #1d1d1d; }
      .tools button:last-child { width: 15px; background: #282828; }
      .graph { display: block; width: 100%; height: 109px; margin: 4px 0 6px; }
      .points { height: 13px; gap: 1px; --size: 12px; border-radius: 2px; overflow: hidden; }
      .points button { background: #4c4c4c; }
      .points button:last-child { --size: 10px; }
      .points button.on { background: #4772b3; }
      .points input { flex: 1; width: 0; height: 13px; text-align: center; background: #4c4c4c; }
    `;
  }
  html() {
    const px = (x, y) => [(x * 149 + 0.5).toFixed(1), (108 - y * 108).toFixed(1)];
    let d = "M" + px(0, 0);
    for (let i = 1; i <= 200; i++) d += "L" + px(i / 200, evalCurve(CURVE, i / 200));
    const knots = CURVE.slice(1).map(([x, y], i) => {
      const [a, b] = px(x, y);
      return `<rect x="${a - 2}" y="${b - 2}" width="4" height="4" rx="1" fill="${i === 1 ? "#fff" : "#999"}"/>`;
    }).join("");
    return `
      <div class="tools"><button class="lit" aria-label="Zoom in">${icon("zoomin")}</button><button class="off" aria-label="Zoom out">${icon("zoomout")}</button><button class="deep" aria-label="Clipping">${icon("clip")}</button><button aria-label="Curve options">${icon("down")}</button></div>
      <svg class="graph" viewBox="0 0 150 109" preserveAspectRatio="none">
        <path d="M0 0h150v109H0z" fill="#535353"/>
        <path d="M37.500 0v109M75.500 0v109M112.500 0v109M0 27.500h150M0 54.500h150M0 81.500h150" stroke="#646464"/>
        <path d="${d}L149.500 108Z" fill="#383838"/>
        <path d="${d}" fill="none" stroke="#1a1a1a"/>
        <path d="M.5 .5h149v108H.5z" fill="none" stroke="#7a7a7a"/>
        ${knots}
      </svg>
      <div class="points"><button class="on" aria-label="Auto handle">${icon("hauto")}</button><button aria-label="Vector handle">${icon("hvec")}</button><button aria-label="Clamped handle">${icon("hclamp")}</button><input type="text" value="0.5181" aria-label="X"><input type="text" value="0.4062" aria-label="Y"><button aria-label="Delete point">${icon("close")}</button></div>`;
  }
}
customElements.define("curve-widget", CurveWidget);

class ObjectPicker extends BlElement {
  css() {
    return `
      :host { display: block; padding: 5px 8px 0 7px; font-size: 8px; line-height: 13px; }
      .toggle { display: flex; gap: 1px; height: 13px; border-radius: 2px; overflow: hidden; margin-bottom: 2px; }
      .toggle button { flex: 1; line-height: 13px; background: #545454; }
      .toggle button.on { background: #4772b3; }
      .pick { display: flex; align-items: center; gap: 6px; height: 13px; padding: 0 4px 0 1px; border: 1px solid #404040; border-radius: 2px; background: #1d1d1d; --size: 11px; }
      .pick input { flex: 1; width: 0; height: 11px; }
      .pick button { --size: 9px; display: flex; }
      .socket { position: absolute; left: -4px; margin-top: 3px; width: 8px; height: 8px; }
    `;
  }
  html() {
    return `<div class="toggle"><button>Original</button><button class="on">Relative</button></div>
      <svg class="socket" viewBox="0 0 8 8"><circle cx="4" cy="4" r="3.200" fill="${SOCKETS.obj}"/></svg>
      <div class="pick">${icon("object")}<input type="text" value="Plane" aria-label="Object"><button aria-label="Clear">${icon("close")}</button></div>`;
  }
}
customElements.define("object-picker", ObjectPicker);

// Link between two sockets
function wire(x1, y1, x2, y2, color, width = 1, extra = "") {
  const k = Math.min(Math.abs(x2 - x1) / 2, 40);
  const d = `M${x1} ${y1}C${x1 + k} ${y1} ${x2 - k} ${y2} ${x2} ${y2}`;
  return `<path d="${d}" stroke="#111" stroke-width="${width + 2}" opacity=".6"/><path d="${d}" stroke="${color}" stroke-width="${width}" ${extra}/>`;
}

class NodeEditor extends BlElement {
  css() {
    return `
      :host { display: grid; grid-template: 26px 1fr / minmax(0, 1fr); position: relative; overflow: hidden; background: #1d1d1d; border-radius: 0 5px 0 0; box-shadow: inset -1px 1px #303030; }
      .canvas { grid-area: 1 / 1 / 3 / 2; position: relative; overflow: hidden;
        background: radial-gradient(circle at 1px 1px, #2a2a2a 1px, #0000 2px) 55px 63px / 69px 69px; }
      svg.layer { position: absolute; inset: 0; width: 100%; height: 100%; overflow: visible; fill: none; pointer-events: none; }
      .ink { stroke: #5a96c8; stroke-width: 1.3; stroke-linecap: round; stroke-linejoin: round; }
      .ink text { fill: #5a96c8; stroke: none; font-family: Lato, sans-serif; font-style: italic; font-weight: 300; }
      .bar { grid-area: 1 / 1; z-index: 1; display: grid; grid-template-columns: minmax(0, 505fr) auto minmax(0, 621fr); align-items: center; padding: 3px 8px 3px 0; height: 26px; }
      .bar > div { display: flex; align-items: center; }
      .first { width: 20px; border-left: 0; border-radius: 0 4px 4px 0; margin-right: 5px; }
      .tree { color: #8f8f8f; background: #1d1d1d; }
      .tree button { width: 20px; background: #2b2b2b; color: #5a5a5a; }
      .tree .type { width: 30px; background: #232323; }
      .tree input { width: 104px; height: 18px; padding-left: 8px; border-left: 1px solid #303030; }
      .pin { margin: 0 8px; color: #fff; display: flex; }
      .end { justify-content: flex-end; gap: 5px; }
      .end button { width: 19px; }
      .crumb { grid-area: 2 / 1; z-index: 1; padding-top: 11px; justify-self: start; }
      .thumb { position: absolute; right: 2px; top: 27px; width: 3px; height: 279px; border-radius: 2px; background: #333; }
      .side { position: absolute; right: 0; top: 40px; width: 9px; height: 14px; border-radius: 4px 0 0 4px; background: #161616; display: flex; align-items: center; --size: 10px; }
      .triple { display: grid; gap: 1px; margin: 0 8px 2px 7px; border-radius: 2px; overflow: hidden; }
      .triple input { height: 13px; width: 100%; text-align: center; background: #545454; }
    `;
  }
  html() {
    return `
      <div class="canvas">
        <svg class="layer"><defs><linearGradient id="fade"><stop offset="0" stop-color="#9a9a9a"/><stop offset="1" stop-color="#5454b0"/></linearGradient></defs>
        <g transform="translate(0 -450)">
          ${wire(158, 528.5, 1101, 534.5, "#27bd8c", 2)}
          ${wire(1197, 517, 1214, 508, "#2fd6a3", 2)}
          ${wire(299, 850.5, 312, 840.5, "#2fd6a3", 2)}
          ${wire(568, 581.5, 1101, 549.5, "#8d2b2b", 1, 'stroke-dasharray="9 2"')}
          <path d="M836.500 560v9" stroke="#8d2b2b"/>
          ${wire(279, 570.5, 328, 635.5, "#8a8a8a")}
          ${wire(162, 669.5, 183, 618.5, "#5454b0")}
          ${wire(279, 662.5, 328, 665.5, "#8a8a8a", 1, 'stroke-dasharray="8 2"')}
          ${wire(425, 584, 472, 599, "#9c8ba2")}
          ${wire(409, 791.5, 427, 799.5, "#8a8a8a")}
          ${wire(524, 729.5, 548, 849.5, "#8a8a8a", 1, 'stroke-dasharray="7 1"')}
          ${wire(714, 669, 736, 766.5, "#8a8a8a", 1, 'stroke-dasharray="7 1"')}
          ${wire(714, 669, 863, 676.5, "url(#fade)", 1, 'stroke-dasharray="9 1"')}
          ${wire(833, 718.5, 863, 692, "#5454b0")}
          ${wire(959, 642, 980, 642.5, "#5454b0")}
          ${wire(1077, 606.5, 1101, 579.5, "#5454b0")}
        </g></svg>

        <geo-node name="Grid" head="green" x="62" y="504">
          <node-row kind="out" label="Mesh" socket="geo" shape="round" gap="4"></node-row>
          <node-row kind="out" label="UV Map" socket="vec"></node-row>
          <node-row kind="field" label="Size X" value="3 m" socket="num" shape="round" gap="2"></node-row>
          <node-row kind="field" label="Size Y" value="3 m" socket="num" shape="round"></node-row>
          <node-row kind="field" label="Vertices X" value="50" socket="int" shape="round"></node-row>
          <node-row kind="field" label="Vertices Y" value="50" socket="int" shape="round"></node-row>
        </geo-node>
        <geo-node name="Separate XYZ" head="blue" x="183" y="547">
          <node-row kind="out" label="X" socket="num"></node-row>
          <node-row kind="out" label="Y" socket="num"></node-row>
          <node-row kind="out" label="Z" socket="num"></node-row>
          <node-row kind="in" label="Vector" socket="vec" gap="3"></node-row>
        </geo-node>
        <geo-node name="Position" head="red" x="66" y="646">
          <node-row kind="out" label="Position" socket="vec"></node-row>
        </geo-node>
        <geo-node name="Group Input" head="dark" x="56" y="701">
          <node-row kind="out" label="Geometry" socket="geo" shape="round" gap="4"></node-row>
          <node-row kind="out" socket="none"></node-row>
        </geo-node>
        <geo-node name="Equal" head="blue" x="329" y="560">
          <node-row kind="out" label="Result" socket="bool"></node-row>
          <node-row kind="select" value="Float" gap="3"></node-row>
          <node-row kind="select" value="Equal" gap="3"></node-row>
          <node-row kind="in" label="A" socket="num"></node-row>
          <node-row kind="field" label="B" value="0.700" socket="num" shape="hollow" gap="1"></node-row>
          <node-row kind="in" label="Epsilon" socket="num"></node-row>
        </geo-node>
        <geo-node name="Random Value" head="blue" x="183" y="639">
          <node-row kind="out" label="Value" socket="num"></node-row>
          <node-row kind="select" value="Float" gap="4"></node-row>
          <node-row kind="field" label="Min" value="0.000" socket="num" shape="hollow" gap="2"></node-row>
          <node-row kind="field" label="Max" value="0.600" socket="num" shape="hollow"></node-row>
          <node-row kind="in" label="ID" socket="int"></node-row>
          <node-row kind="field" label="Seed" value="0" socket="int" shape="hollow"></node-row>
        </geo-node>
        <geo-node name="Object Info" head="red" x="203" y="766">
          <node-row kind="out" label="Transform" socket="mat" shape="round" gap="4"></node-row>
          <node-row kind="out" label="Location" socket="vec" shape="round"></node-row>
          <node-row kind="out" label="Rotation" socket="rot" shape="round"></node-row>
          <node-row kind="out" label="Scale" socket="vec" shape="round"></node-row>
          <node-row kind="out" label="Geometry" socket="geo" shape="round"></node-row>
          <object-picker></object-picker>
          <node-row kind="check" label="As Instance" socket="bool" shape="round" gap="2"></node-row>
        </geo-node>
        <geo-node name="Geometry Proximity" head="green" x="313" y="752">
          <node-row kind="out" label="Position" socket="vec" gap="4"></node-row>
          <node-row kind="out" label="Distance" socket="num"></node-row>
          <node-row kind="out" label="Is Valid" socket="bool"></node-row>
          <node-row kind="select" value="Faces" gap="3"></node-row>
          <node-row kind="in" label="Geometry" socket="geo" shape="round" gap="1"></node-row>
          <node-row kind="in" label="Group ID" socket="int" shape="hollow"></node-row>
          <node-row kind="in" label="Sample Position" socket="vec" gap="1"></node-row>
          <node-row kind="in" label="Sample Group ID" socket="int" shape="hollow"></node-row>
        </geo-node>
        <geo-node name="Map Range" head="blue" x="428" y="706">
          <node-row kind="out" label="Result" socket="num"></node-row>
          <node-row kind="select" value="Float" gap="5"></node-row>
          <node-row kind="select" value="Linear" gap="2"></node-row>
          <node-row kind="check" label="Clamp" on gap="3"></node-row>
          <node-row kind="in" label="Value" socket="num"></node-row>
          <node-row kind="field" label="From Min" value="0.000" socket="num" shape="hollow" gap="1"></node-row>
          <node-row kind="field" label="From Max" value="2.500" socket="num" shape="hollow"></node-row>
          <node-row kind="field" label="To Min" value="0.000" socket="num" shape="hollow"></node-row>
          <node-row kind="field" label="To Max" value="1.000" socket="num" shape="hollow"></node-row>
        </geo-node>
        <geo-node name="Combine XYZ" head="blue" x="472" y="557">
          <node-row kind="out" label="Vector" socket="vec" gap="4"></node-row>
          <node-row kind="in" label="X" socket="num" gap="2"></node-row>
          <node-row kind="field" label="Y" value="0.000" socket="num" shape="hollow"></node-row>
          <node-row kind="field" label="Z" value="0.000" socket="num" shape="hollow" gap="1"></node-row>
        </geo-node>
        <geo-node name="Float Curve" head="blue" x="548" y="645" w="166">
          <node-row kind="out" label="Value" socket="num" gap="4"></node-row>
          <curve-widget></curve-widget>
          <node-row kind="field" label="Factor" value="1.000" socket="num" shape="hollow" full></node-row>
          <node-row kind="in" label="Value" socket="num"></node-row>
        </geo-node>
        <geo-node name="Combine XYZ" head="blue" x="737" y="695">
          <node-row kind="out" label="Vector" socket="vec"></node-row>
          <node-row kind="field" label="X" value="0.000" socket="num" shape="hollow" gap="3"></node-row>
          <node-row kind="field" label="Y" value="0.000" socket="num" shape="hollow"></node-row>
          <node-row kind="in" label="Z" socket="num"></node-row>
        </geo-node>
        <geo-node name="Multiply" head="purple" x="863" y="617">
          <node-row kind="out" label="Vector" socket="vec" gap="4"></node-row>
          <node-row kind="select" value="Multiply" gap="4"></node-row>
          <node-row kind="in" label="Vector" socket="vec" gap="1"></node-row>
          <node-row kind="in" label="Vector" socket="vec"></node-row>
        </geo-node>
        <geo-node name="Multiply" head="purple" x="981" y="583">
          <node-row kind="out" label="Vector" socket="vec"></node-row>
          <node-row kind="select" value="Multiply" gap="4"></node-row>
          <node-row kind="in" label="Vector" socket="vec" gap="2"></node-row>
          <node-row kind="in" label="Vector" socket="vec" shape="hollow"></node-row>
          <div class="triple"><input type="text" value="1.000" aria-label="X"><input type="text" value="1.000" aria-label="Y"><input type="text" value="1.000" aria-label="Z"></div>
        </geo-node>
        <geo-node name="Set Position" head="green" x="1101" y="493">
          <node-row kind="out" label="Geometry" socket="geo" shape="round"></node-row>
          <node-row kind="in" label="Geometry" socket="geo" shape="round" gap="3"></node-row>
          <node-row kind="in" label="Selection" socket="bool"></node-row>
          <node-row kind="in" label="Position" socket="vec"></node-row>
          <node-row kind="in" label="Offset" socket="vec"></node-row>
        </geo-node>
        <geo-node name="Group Output" head="dark" x="1214" y="484">
          <node-row kind="in" label="Geometry" socket="geo" shape="round"></node-row>
          <node-row kind="in" socket="none"></node-row>
        </geo-node>

        <svg class="layer ink"><g transform="translate(0 -450)">
          ${stroke([[454, 663.5], [440, 665], [418, 666.5], [383, 667.5], [353, 667.3], [328, 662.5], [317, 655], [318, 647], [337, 637], [357, 634.5], [397, 636], [420, 639.5], [433, 645], [437, 652], [432, 658], [418, 666.5]])}
          <path d="M437 658L471 661.500M467 655.500L472 661L470 665L462 671"/>
          <text x="485" y="679" font-size="44">x</text>
          ${stroke([[735, 853.5], [713, 856], [683, 859.5], [653, 860.5], [613, 860], [593, 856.5], [570, 843], [553, 831.5], [537, 815], [527, 793], [523.5, 767], [528, 740], [540, 707], [557, 685], [583, 667], [610, 658], [633, 655.5], [660, 659], [697, 673], [730, 692], [745, 707], [749, 723], [748, 773], [751, 800], [754, 827], [753, 840], [743, 858], [732, 866], [723, 864]])}
          <path d="M732 823.500L842 825M827.500 813L842.500 825L827.500 836.500"/>
          <text x="874" y="850" font-size="60">y</text>
          ${stroke([[858, 592], [865, 583], [861.5, 575], [846.5, 572.5]])}
          <path d="M862.500 570.700L846 572.500L849 583"/>
          <text x="608" y="610" font-size="34">selection</text>
          <text x="752" y="610" font-size="38">mute</text>
        </g></svg>
      </div>
      <div class="bar">
        <div><div class="group first"><button aria-label="Editor type">${icon("down")}</button></div>
          ${["View", "Select", "Add", "Node"].map((m) => `<button class="menu">${m}</button>`).join("")}</div>
        <div>
          <div class="group tree"><button class="type" aria-label="Browse">${icon("nodetree")}${chevron}</button><input type="text" value="Geometry Nodes" aria-label="Name"><button aria-label="Fake user">${icon("shield")}</button><button aria-label="New">${icon("copy")}</button><button aria-label="Unlink">${icon("close")}</button></div>
          <span class="pin">${icon("pinned")}</span>
        </div>
        <div class="end"><div class="group"><button class="grey" aria-label="Snap">${icon("magnet")}</button></div>
          <div class="group"><button class="on" aria-label="Overlays">${icon("overlay")}</button><button aria-label="Overlay options">${icon("down")}</button></div></div>
      </div>
      <div class="crumb">odes</div>
      <div class="thumb"></div>
      <div class="side">${icon("left")}</div>`;
  }
}
customElements.define("node-editor", NodeEditor);

// ---------- outliner ----------
class OutlinerRow extends BlElement {
  css() {
    return `
      :host { display: flex; align-items: center; height: 20px; color: #c0c0c0; white-space: nowrap; }
      .pad { width: ${Math.max(0, 19 + 20 * this.getAttribute("depth"))}px; flex: none; }
      .arrow { display: flex; width: 20px; flex: none; justify-content: center; color: #999; }
      .kind { display: grid; place-items: center; width: 20px; height: 19px; flex: none; border-radius: 4px; color: #e6e6e6; margin-right: 4px; }
      .orange { color: #c98248; }
      .lit { background: #505050; box-shadow: inset 0 0 0 1px #6e6e6e; }
      .bright { color: #fff; }
      .data { display: flex; gap: 4px; color: #1fb488; margin-left: 21px; }
      .data span { display: grid; place-items: center; width: 20px; height: 18px; border-radius: 4px; margin: 0 -2px; }
      .data .blue { color: #5d83d6; }
      .end { margin-left: auto; display: flex; gap: 4px; color: #e0e0e0; flex: none; margin-right: -3px; }
      .end input { width: 11px; height: 11px; margin: 2px 4px 0 0; border-radius: 1px; background: #e6e6e6; }
      .end label { position: relative; display: flex; }
      .end svg { position: absolute; left: 0; top: 2px; width: 11px; height: 11px; pointer-events: none; }
    `;
  }
  html() {
    const a = (n) => this.getAttribute(n);
    const data = (a("data") || "").split(" ").filter(Boolean)
      .map((n) => `<span class="${n === "wrenchline" ? "blue" : n === "cameradata" ? "lit" : ""}">${icon(n)}</span>`).join("");
    const check = this.hasAttribute("check")
      ? '<label><input type="checkbox" checked aria-label="Exclude"><svg viewBox="0 0 11 11"><path d="M2 5.500l2.500 2.500L9 2.500" fill="none" stroke="#282828" stroke-width="1.600"/></svg></label>' : "";
    return `<span class="pad"></span>
      <span class="arrow">${a("arrow") ? icon(a("arrow")) : ""}</span>
      <span class="kind ${a("tone") || ""} ${this.hasAttribute("lit") ? "lit" : ""}">${icon(a("icon"))}</span>
      <span class="${this.hasAttribute("check") ? "bright" : ""}">${a("name")}</span>
      <span class="data">${data}</span>
      ${a("icon") === "collection" && !a("arrow") ? "" : `<span class="end">${check}${icon("eye")}${icon("still")}</span>`}`;
  }
}
customElements.define("outliner-row", OutlinerRow);

class OutLiner extends BlElement {
  css() {
    return `
      :host { display: grid; grid-template: 21px 1fr / minmax(0, 1fr); overflow: hidden; border-radius: 0 0 0 5px; background: #282828; box-shadow: inset 1px -1px #3a3a3a; }
      .bar { height: 21px; padding: 0 0 4px 7px; gap: 6px; background: #2b2b2b; margin-left: 1px; }
      .group { width: 31px; }
      .group button { width: 100%; }
      search-box { margin: 0 10px; }
      .last { border-radius: 4px 0 0 4px; }
      .last button { width: 20px; }
      .rows { position: relative; margin: 0 0 1px 1px; background: repeating-linear-gradient(#282828 0 20px, #2b2b2b 20px 40px); }
      .rows::before { content: ""; position: absolute; left: 28px; top: 44px; height: 70px; width: 1px; background: #777; }
    `;
  }
  html() {
    return `
      <div class="bar">
        <div class="group"><button aria-label="Editor type">${icon("tree")}${chevron}</button></div>
        <div class="group"><button aria-label="Display mode">${icon("images")}${chevron}</button></div>
        <search-box></search-box>
        <div class="group last"><button aria-label="Filter">${icon("funnel")}</button></div>
      </div>
      <div class="rows">
        <outliner-row depth="-1" icon="collection" name="Scene Collection"></outliner-row>
        <outliner-row depth="0" arrow="down" icon="collection" lit check name="Collection"></outliner-row>
        <outliner-row depth="1" arrow="right" icon="camera" tone="orange" name="Camera" data="cameradata"></outliner-row>
        <outliner-row depth="1" arrow="right" icon="meshobj" tone="orange" name="Cube" data="wrenchline meshdata"></outliner-row>
        <outliner-row depth="1" arrow="right" icon="light" tone="orange" name="Light" data="lightdata"></outliner-row>
        <outliner-row depth="1" arrow="right" icon="meshobj" tone="orange" lit name="Plane" data="meshdata"></outliner-row>
      </div>`;
  }
}
customElements.define("out-liner", OutLiner);

// ---------- properties ----------
class PropEditor extends BlElement {
  css() {
    return `
      :host { display: grid; grid-template: 25px 1fr / 28px minmax(0, 1fr); overflow: hidden; border-radius: 5px 0 0 0; background: #303030; box-shadow: inset 1px 1px #3d3d3d; }
      .bar { grid-column: 1 / 3; align-items: flex-start; padding: 2px 0 0 8px; }
      .group { width: 31px; }
      .group button { width: 100%; }
      search-box { margin: 0 auto 0 29px; }
      .last { width: 14px; border-right: 0; border-radius: 4px 0 0 4px; }
      nav { background: #1d1d1d; margin-left: 1px; padding: 5px 0 0 1px; }
      nav div { display: grid; gap: 2px; padding-bottom: 1px; margin-bottom: 7px; border-bottom: 1px solid #151515; }
      nav div:first-child { padding-top: 4px; }
      nav div:last-child { padding-top: 3px; }
      nav button { display: grid; place-items: center; width: 100%; height: 26px; color: #b0b0b0; border-radius: 4px 0 0 4px; --size: 16px; }
      nav .sel { background: #303030; }
      .head { display: flex; align-items: center; height: 36px; padding-left: 10px; }
      .head span { flex: 1; margin-left: 8px; }
      .head .pin { color: #8a8a8a; margin-right: -4px; }
      .add { display: grid; grid-template-columns: 22px 1fr 22px; align-items: center; width: calc(100% + 15px); height: 20px; margin: 8px 0 0 8px; border-radius: 4px; background: #545454; color: #e6e6e6; padding-left: 4px; }
    `;
  }
  html() {
    const tab = (name, color = "", cls = "") => `<button class="${cls}" style="color:${color}" aria-label="${name}">${icon(name)}</button>`;
    return `
      <div class="bar">
        <div class="group"><button aria-label="Editor type">${icon("props")}${chevron}</button></div>
        <search-box></search-box>
        <div class="group last"><button aria-label="Options">${icon("down")}</button></div>
      </div>
      <nav>
        <div>${tab("tools")}</div>
        <div>${tab("render")}${tab("output")}${tab("images")}${tab("scene")}${tab("world", "#b3555c")}</div>
        <div>${tab("box", "#dcdcdc")}</div>
        <div>${tab("object", "#c98248")}${tab("wrench", "#6f9bff", "sel")}${tab("particles", "#4f77c7")}${tab("physics", "#5580d6")}${tab("constraint", "#5d83d6")}${tab("meshdata", "#22b98b")}${tab("material", "#b3555c")}</div>
      </nav>
      <section>
        <div class="head">${icon("object")}<span>Plane</span><i class="pin">${icon("pin")}</i></div>
        <button class="add">${icon("plus")}<span>Add Modifier</span></button>
      </section>`;
  }
}
customElements.define("prop-editor", PropEditor);

class AppWindow extends BlElement {
  css() {
    return `
      :host { display: grid; grid-template-columns: minmax(0, 1356fr) minmax(0, 244fr); gap: 2px; height: 100vh; }
      .left, .right, .top { display: grid; min-height: 0; min-width: 0; }
      .left { grid-template-rows: minmax(0, 447fr) minmax(0, 465fr); gap: 3px; }
      .top { grid-template-columns: minmax(0, 484fr) minmax(0, 870fr); gap: 2px; }
      .right { grid-template-rows: minmax(0, 273fr) minmax(0, 639fr); gap: 3px; }
    `;
  }
  html() {
    return `
      <div class="left">
        <div class="top"><spread-sheet></spread-sheet><view-port></view-port></div>
        <node-editor></node-editor>
      </div>
      <div class="right"><out-liner></out-liner><prop-editor></prop-editor></div>`;
  }
}
customElements.define("app-window", AppWindow);
</script>
</body>
</html>
